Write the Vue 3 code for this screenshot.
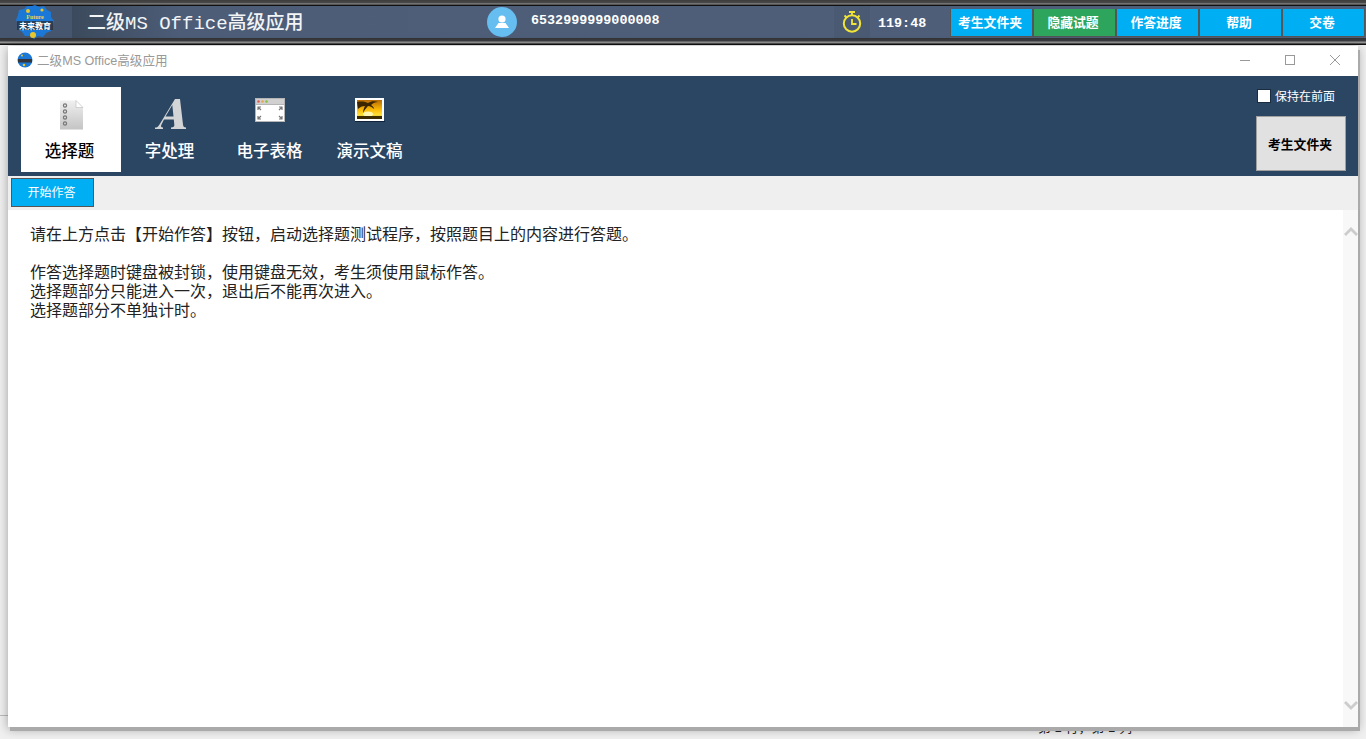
<template>
  <div class="exam-page">
    <div class="topbar">
      <div class="bar">
        <div class="logo-box">
          <svg viewBox="0 0 40 36" width="40" height="36">
            <path d="M20 1l4 2 5-1 3 4 4 2 0 5 3 4-2 5-1 5-5 2-3 4-5-1-4 3-4-3-5 0-3-4-4-3 0-5-2-4 2-5 1-5 5-1 3-3 5 0z" fill="#1b78d6"/>
            <circle cx="13" cy="7" r="2" fill="#e8c62c"/>
            <circle cx="27" cy="6" r="1.6" fill="#e8c62c"/>
            <circle cx="18" cy="31" r="3" fill="#e8c62c"/>
            <rect x="2" y="17" width="36" height="9" fill="#2a2d33" opacity=".75"/>
            <text x="20" y="15" text-anchor="middle" class="logo-en">Future</text>
            <text x="20" y="25" text-anchor="middle" class="logo-cn">未来教育</text>
          </svg>
        </div>
        <div class="exam-title">二级MS Office高级应用</div>
        <div class="avatar">
          <svg viewBox="0 0 30 30" width="30" height="30">
            <circle cx="15" cy="12" r="3.6" fill="#fff"/>
            <path d="M8 21l3.5-5h7l3.5 5z" fill="#fff"/>
          </svg>
        </div>
        <div class="ticket">6532999999000008</div>
        <div class="clock-box">
          <svg viewBox="0 0 22 24" width="22" height="24" fill="none" stroke="#f2e437" stroke-width="2">
            <circle cx="11" cy="13.5" r="8.2"/>
            <path d="M11 9v5h4.5M8 2h6M11 2v3M3.5 5.5l2 2M18.5 5.5l-2 2" stroke-width="1.8"/>
          </svg>
        </div>
        <div class="timer">119:48</div>
        <div class="top-btns">
          <button v-for="b in topButtons" :key="b" class="top-btn" :class="{ green: b === '隐藏试题' }">{{ b }}</button>
        </div>
      </div>
    </div>

    <div class="window">
      <div class="titlebar">
        <svg viewBox="0 0 16 16" width="16" height="16" class="win-logo">
          <circle cx="8" cy="8" r="7.5" fill="#1b78d6"/>
          <rect x="1" y="7" width="14" height="3.5" fill="#33373d"/>
          <circle cx="5" cy="3.5" r="1" fill="#e8c62c"/>
          <circle cx="7" cy="13" r="1.3" fill="#e8c62c"/>
        </svg>
        <span class="win-title">二级MS Office高级应用</span>
        <div class="win-ctrls">
          <svg viewBox="0 0 12 12" width="12" height="12" stroke="#999" fill="none"><path d="M1 6.5h10"/></svg>
          <svg viewBox="0 0 12 12" width="12" height="12" stroke="#999" fill="none"><rect x="1.5" y="1.5" width="9" height="9"/></svg>
          <svg viewBox="0 0 12 12" width="12" height="12" stroke="#999" fill="none"><path d="M1 1l10 10M11 1L1 11"/></svg>
        </div>
      </div>

      <div class="nav">
        <div v-for="t in tabs" :key="t.name" class="tab" :class="{ active: t.name === '选择题' }">
          <div class="tab-icon">
            <svg v-if="t.icon === 'list'" class="icon-list" viewBox="0 0 24 30" width="24" height="31">
              <defs>
                <linearGradient id="pageGrad" x1="0" y1="0" x2="0" y2="1">
                  <stop offset="0" stop-color="#f0f0f0"/><stop offset="1" stop-color="#c4c4c4"/>
                </linearGradient>
              </defs>
              <path d="M0 1h16l7 7v22H0z" fill="url(#pageGrad)"/>
              <path d="M16 1v7h7z" fill="#fff" stroke="#bbb" stroke-width=".6"/>
              <g fill="none" stroke="#777" stroke-width="1.2">
                <circle cx="5" cy="6" r="1.6"/><circle cx="5" cy="12" r="1.6"/>
                <circle cx="5" cy="18" r="1.6"/><circle cx="5" cy="24" r="1.6"/>
              </g>
            </svg>
            <svg v-else-if="t.icon === 'font'" viewBox="0 0 32 32" width="32" height="32">
              <path d="M1 31v-1.5c2 0 3-.5 4.5-3L21 1h5l3 25.500c.2 2 .8 3 3 3V31H17v-1.500c2.500 0 3.500-.8 3.300-3l-.5-5H10l-2.500 5c-1 2-.5 3 1.500 3V31zM11.500 18.500h8L18.300 7z" fill="#d2d4d6"/>
            </svg>
            <svg v-else-if="t.icon === 'window'" viewBox="0 0 30 24" width="30" height="24">
              <rect width="30" height="24" fill="#b5b5b5"/>
              <rect x="1" y="1" width="28" height="5" fill="#d0d0d0"/>
              <circle cx="3.500" cy="3.500" r="1.300" fill="#e25b5b"/>
              <circle cx="7.500" cy="3.500" r="1.300" fill="#e3a84e"/>
              <circle cx="11.500" cy="3.500" r="1.300" fill="#8cbf3f"/>
              <rect x="1" y="7" width="28" height="16" fill="#fff"/>
              <g stroke="#777" stroke-width="1.200" fill="none">
                <path d="M3 12V9h3M3 9l3 3M27 12V9h-3M27 9l-3 3M3 18v3h3M3 21l3-3M27 18v3h-3M27 21l-3-3"/>
              </g>
            </svg>
            <svg v-else viewBox="0 0 30 24" width="30" height="24">
              <defs>
                <linearGradient id="sunGrad" x1="0" y1="0" x2="0" y2="1">
                  <stop offset="0" stop-color="#b86a06"/><stop offset=".5" stop-color="#f9b805"/><stop offset=".8" stop-color="#ffe23a"/><stop offset="1" stop-color="#4a3500"/>
                </linearGradient>
              </defs>
              <rect width="29" height="23" fill="#fff"/>
              <rect x="2" y="2" width="25" height="19" fill="url(#sunGrad)"/>
              <ellipse cx="13" cy="16" rx="5" ry="2.500" fill="#fff6b0"/>
              <path d="M2 4c5-1 9 0 11 1 3-2 7-2 10-1-3 0-5 1-7 3 2 1 3 3 3 4-2-2-4-3-6-3-2 2-4 5-5 7 0-3 1-5 2-7-3 0-5 1-7 3z" fill="#3b2500"/>
              <rect x="2" y="18" width="25" height="3" fill="#3a2c00"/>
              <path d="M0 23.500h30" stroke="#10213a"/>
            </svg>
          </div>
          <div class="tab-label">{{ t.name }}</div>
        </div>
        <div class="nav-right">
          <label class="keep-front"><span class="check"></span>保持在前面</label>
          <button class="folder-btn">考生文件夹</button>
        </div>
      </div>

      <div class="toolbar">
        <button class="start-btn">开始作答</button>
      </div>

      <div class="content">
        <div class="notes">
          <p>请在上方点击【开始作答】按钮，启动选择题测试程序，按照题目上的内容进行答题。</p>
          <p class="blank"></p>
          <p>作答选择题时键盘被封锁，使用键盘无效，考生须使用鼠标作答。</p>
          <p>选择题部分只能进入一次，退出后不能再次进入。</p>
          <p>选择题部分不单独计时。</p>
        </div>
        <div class="scroll">
          <svg viewBox="0 0 14 9" width="14" height="9" fill="none" stroke="#ccc" stroke-width="2.800"><path d="M1 8l6-6 6 6"/></svg>
          <svg viewBox="0 0 14 9" width="14" height="9" fill="none" stroke="#ccc" stroke-width="2.800"><path d="M1 1l6 6 6-6"/></svg>
        </div>
      </div>
    </div>

    <div class="under-strip">
      <span class="status-text">第 1 行，第 1 列</span>
    </div>
  </div>
</template>

<script setup>
const topButtons = ['考生文件夹', '隐藏试题', '作答进度', '帮助', '交卷']
const tabs = [
  { name: '选择题', icon: 'list' },
  { name: '字处理', icon: 'font' },
  { name: '电子表格', icon: 'window' },
  { name: '演示文稿', icon: 'slide' },
]
</script>

<style>
html, body { margin: 0; background: #f0f0f0; overflow: hidden; }
</style>

<style scoped>
.exam-page { width: 1366px; height: 739px; overflow: hidden; position: relative; background: #f0f0f0; font-family: "Liberation Sans", "Noto Sans CJK SC", sans-serif; }
.topbar { height: 45px; box-sizing: border-box; padding-top: 6px; background: linear-gradient(180deg, #3c3c3c 0, #4a4a4a 3px, #999 4px, #111 5px, #111 6px, #333 38px, #3a3d42 41px, #9a9a9a 42px, #8a8a8a 43px, #111 44px, #111 45px); }
.bar { height: 32px; display: flex; align-items: center; background: linear-gradient(90deg, #3b4a5c 72px, #4d5d78 180px, #4f5f7a 100%); }
.logo-box { width: 72px; height: 32px; background: #46566f; display: flex; align-items: center; justify-content: center; flex-shrink: 0; }
.logo-box svg { overflow: visible; margin-left: -2px; }
.logo-en { font: bold 6px "Liberation Serif", serif; fill: #e8d84a; }
.logo-cn { font: bold 8px "Noto Sans CJK SC", sans-serif; fill: #fff; }
.exam-title { width: 400px; margin-left: 15px; margin-bottom: 3px; font: 500 19px "Liberation Mono", "Noto Sans CJK SC", monospace; color: #f2f4f6; flex-shrink: 0; }
.avatar { width: 30px; height: 30px; border-radius: 50%; background: #66bdf0; margin-bottom: 1px; flex-shrink: 0; }
.ticket { width: 303px; margin-left: 14px; margin-bottom: 4px; font: bold 13.4px "Liberation Mono", monospace; color: #fff; flex-shrink: 0; }
.clock-box { width: 36px; height: 32px; display: flex; align-items: center; justify-content: center; background: #4a5a73; flex-shrink: 0; }
.timer { width: 72px; margin-left: 8px; margin-top: 2px; font: bold 13.4px "Liberation Mono", monospace; color: #fff; flex-shrink: 0; }
.top-btns { display: flex; gap: 2px; height: 28px; background: #555; padding: 0 1px; flex-shrink: 0; margin-top: 1px; }
.top-btn { width: 81px; height: 27px; padding: 0 3px 2px 0; border: none; background: #00aef4; color: #fff; font: bold 12.8px "Noto Sans CJK SC", sans-serif; }
.top-btn.green { background: #2da55c; }

.window { width: 1350px; height: 681px; margin: 1px 0 0 8px; background: #fff; display: flex; flex-direction: column; position: relative; z-index: 1; box-shadow: 2px 4px 0 #aaa, 0 2px 10px rgba(0,0,0,.35); }
.titlebar { height: 30px; display: flex; align-items: center; padding: 0 0 3px 9px; box-sizing: border-box; flex-shrink: 0; }
.win-title { margin-left: 4px; font-size: 12.6px; color: #999; }
.win-ctrls { margin-left: auto; display: flex; gap: 33px; padding-right: 17px; }

.nav { height: 100px; background: #2b4663; display: flex; padding: 11px 0 4px 13px; box-sizing: border-box; flex-shrink: 0; position: relative; }
.tab { width: 100px; height: 85px; display: flex; flex-direction: column; align-items: center; color: #fff; }
.tab.active { background: #fff; color: #000; }
.tab-icon { height: 32px; margin-top: 11px; padding-right: 3px; display: flex; align-items: flex-start; justify-content: center; }
.icon-list { margin-left: 5px; margin-top: 1px; }
.tab-label { margin-top: 9px; padding-right: 3px; font-size: 16.5px; font-weight: 500; line-height: 24px; }
.nav-right { margin-left: auto; width: 102px; display: flex; flex-direction: column; }
.keep-front { height: 29px; margin-top: -6px; display: flex; align-items: center; color: #fff; font-size: 12px; white-space: nowrap; }
.check { width: 12px; height: 12px; background: #fff; border: 1px solid #1a2c40; box-sizing: content-box; margin-left: 1px; margin-right: 4px; }
.folder-btn { width: 90px; height: 55px; margin-top: 6px; padding: 0 2px 1px 0; background: #e1e1e1; border: 1px solid #a0a0a0; font: bold 12.8px "Noto Sans CJK SC", sans-serif; color: #000; }

.toolbar { height: 34px; background: #efefef; padding: 2px 0 0 3px; box-sizing: border-box; flex-shrink: 0; }
.start-btn { width: 83px; height: 29px; padding: 0 2px 2px 0; background: #00aef4; border: 1px solid #555; color: #fff; font: 12px "Noto Sans CJK SC", sans-serif; }

.content { flex: 1; display: flex; min-height: 0; }
.notes { flex: 1; padding: 15px 0 0 22px; font-size: 16px; line-height: 19px; color: #222; }
.notes p { margin: 0; }
.blank { height: 19px; }
.scroll { width: 15px; background: #f8f8f8; display: flex; flex-direction: column; align-items: center; justify-content: space-between; padding: 17px 0 17px; box-sizing: border-box; }

.under-strip { height: 12px; position: relative; text-align: left; }
.under-strip::before { content: ""; position: absolute; left: 0; width: 8px; top: -12px; border-top: 1px solid #bbb; }
.status-text { position: absolute; left: 1038px; top: -7px; font-size: 13px; line-height: 16px; color: #222; white-space: nowrap; }
</style>
